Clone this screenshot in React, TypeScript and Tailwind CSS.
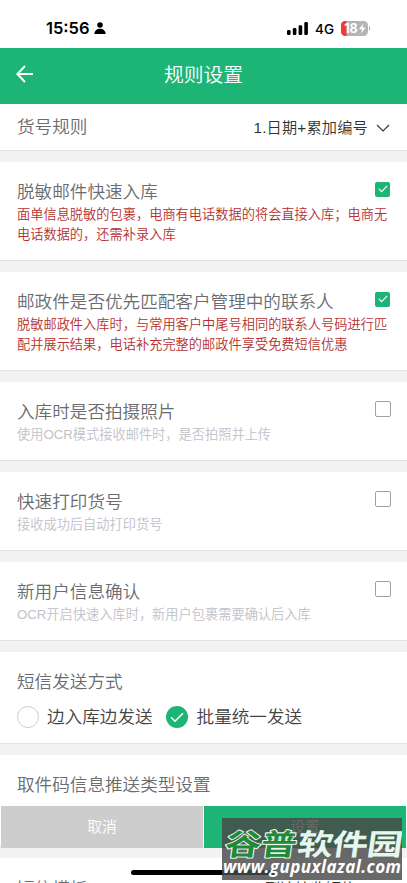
import type { ReactNode } from "react";

type SwitchRule = {
  title: string;
  desc: string;
  checked: boolean;
};

const rules: SwitchRule[] = [
  {
    title: "脱敏邮件快速入库",
    desc: "面单信息脱敏的包裹，电商有电话数据的将会直接入库；电商无电话数据的，还需补录入库",
    checked: true,
  },
  {
    title: "邮政件是否优先匹配客户管理中的联系人",
    desc: "脱敏邮政件入库时，与常用客户中尾号相同的联系人号码进行匹配并展示结果，电话补充完整的邮政件享受免费短信优惠",
    checked: true,
  },
  { title: "入库时是否拍摄照片", desc: "使用OCR模式接收邮件时，是否拍照并上传", checked: false },
  { title: "快速打印货号", desc: "接收成功后自动打印货号", checked: false },
  { title: "新用户信息确认", desc: "OCR开启快速入库时，新用户包裹需要确认后入库", checked: false },
];

function StatusBar() {
  return (
    <div className="flex h-12 shrink-0 items-center bg-white pt-2 pl-[46px] pr-9 text-black">
      <span className="font-['Inter'] text-[16.5px] leading-5 font-semibold">15:56</span>
      <svg className="ml-1 h-3 w-3" viewBox="0 0 12 12" fill="currentColor">
        <circle cx="6" cy="3" r="2.8" />
        <path d="M0.4 12c0-3.2 2.3-5.2 5.6-5.2s5.6 2 5.6 5.2z" />
      </svg>
      <svg className="ml-auto h-[13px] w-[21px]" viewBox="0 0 21 13" fill="currentColor">
        <rect x="0" y="8" width="3.6" height="5" rx="1.2" />
        <rect x="5.8" y="6" width="3.6" height="7" rx="1.2" />
        <rect x="11.6" y="3.2" width="3.6" height="9.8" rx="1.2" />
        <rect x="17.3" y="0" width="3.6" height="13" rx="1.2" />
      </svg>
      <span className="ml-[7px] pt-px font-['Inter'] text-[13.5px] leading-5 font-medium">4G</span>
      <svg className="ml-[7px] h-[15px] w-[30px]" viewBox="0 0 30 15">
        <clipPath id="battery">
          <rect width="27" height="15" rx="4.5" />
        </clipPath>
        <g clipPath="url(#battery)">
          <rect width="27" height="15" fill="#b4b4b4" />
          <rect width="5.5" height="15" fill="#ec3d33" />
        </g>
        <path d="M28 5c1.6.6 1.6 4.4 0 5z" fill="#b4b4b4" />
        <text x="3.2" y="11.8" fill="#fff" fontFamily="Inter" fontSize="12.5" fontWeight="700">
          18
        </text>
        <path d="M22.4 2.5l-4.4 5.8h3l-.9 4.2 4.6-5.9h-3.1z" fill="#fff" />
      </svg>
    </div>
  );
}

function Card({ className, children }: { className: string; children: ReactNode }) {
  return (
    <section className={`shrink-0 border-b border-[#e2e2e2] bg-white px-[17px] ${className}`}>
      {children}
    </section>
  );
}

function Checkbox({ checked }: { checked: boolean }) {
  if (!checked) {
    return <span className="-mr-px h-4 w-4 shrink-0 rounded-xs border border-[#a0a0a0] bg-white" />;
  }
  return (
    <span className="mt-px flex h-[15px] w-[15px] shrink-0 items-start justify-center rounded-xs bg-[#1db576] pt-0.5">
      <svg className="h-2.5 w-2.5" viewBox="0 0 10 10" fill="none" stroke="#fff" strokeWidth="1.1">
        <path d="M0.8 4.7l2.8 2.9 5.6-5.8" />
      </svg>
    </span>
  );
}

function RuleCard({ rule }: { rule: SwitchRule }) {
  return (
    <Card className={rule.checked ? "mb-[11px] h-[99px]" : "mb-[11px] h-[79px]"}>
      <div className="flex items-start justify-between pt-[19px]">
        <h2 className="-mt-px mb-px text-[17.6px] leading-6">{rule.title}</h2>
        <Checkbox checked={rule.checked} />
      </div>
      <p
        className={`-mr-1 text-[13.22px] leading-[19.5px] ${
          rule.checked ? "text-[#b5302e]" : "text-[#bfc1c9]"
        }`}
      >
        {rule.desc}
      </p>
    </Card>
  );
}

function Watermark() {
  return (
    <div className="absolute top-[818px] left-[222px] h-[62px] w-[180px] bg-[#484848]/82">
      <svg className="h-full w-full" viewBox="0 0 180 62">
        <g
          transform="translate(4 36.5) skewX(-8) scale(1.02 0.84)"
          fontFamily="'Noto Sans CJK SC', sans-serif"
          fontSize="35"
          fontWeight="700"
          paintOrder="stroke"
          strokeLinejoin="round"
        >
          <text x="-2" y="0" textLength="70" fill="#218a3a" stroke="#e9f5ea" strokeWidth="2.4">谷普</text>
          <text x="69" y="0" textLength="103" fill="#e6f7ee">软件园</text>
        </g>
        <text x="1" y="55" textLength="178" fill="#fff" fontFamily="'Open Sans', sans-serif" fontSize="17" fontWeight="700" fontStyle="italic">
          www.gupuxlazal.com
        </text>
      </svg>
    </div>
  );
}

export default function App() {
  return (
    <div className="relative flex h-[883px] w-[407px] flex-col overflow-hidden bg-[#f2f2f2] font-['Liberation_Sans','Noto_Sans_CJK_SC',sans-serif] font-[350] text-[#6a6c70]">
      <StatusBar />
      <header className="flex h-14 shrink-0 items-center bg-[#1db576] px-4 text-white">
        <svg className="-mt-1 h-[18px] w-[18px]" viewBox="0 0 18 18" fill="none" stroke="currentColor" strokeWidth="2">
          <path d="M9 1L1.4 9 9 17M1.4 9H17" />
        </svg>
        <h1 className="flex-1 pr-[18px] text-center text-[19.8px]">规则设置</h1>
      </header>

      <Card className="mb-[11px] flex h-[47px] items-center justify-between">
        <span className="text-[17.6px]">货号规则</span>
        <button className="flex items-center gap-2 pt-0.5 text-[15.2px] text-[#333]">
          <span className="tracking-[0.2px]">1.日期+累加编号</span>
          <svg className="h-2 w-3.5" viewBox="0 0 14 8" fill="none" stroke="currentColor" strokeWidth="1.1">
            <path d="M1 1l6 6 6-6" />
          </svg>
        </button>
      </Card>

      {rules.map((rule) => (
        <RuleCard key={rule.title} rule={rule} />
      ))}

      <Card className="mb-[11px] h-[92px] pt-[18px]">
        <h2 className="text-[17.6px] leading-6">短信发送方式</h2>
        <div className="mt-[11px] flex items-center text-[17.6px] leading-6 text-[#444]">
          <span className="h-[22px] w-[22px] rounded-full border border-[#cfcfcf]" />
          <span className="ml-2">边入库边发送</span>
          <span className="ml-[13px] flex h-[22px] w-[22px] items-center justify-center rounded-full bg-[#1db576]">
            <svg className="h-3.5 w-3.5" viewBox="0 0 14 14" fill="none" stroke="#fff" strokeWidth="1.5">
              <path d="M1 7.2l4 4 8-8" />
            </svg>
          </span>
          <span className="ml-[9px]">批量统一发送</span>
        </div>
      </Card>

      <Card className="mb-[11px] h-[92px] pt-[18px]">
        <h2 className="text-[17.6px] leading-6">取件码信息推送类型设置</h2>
      </Card>

      <Card className="flex h-[63px] items-center justify-between">
        <span className="text-[17.6px]">短信模板</span>
        <span className="pr-[34px] text-[15.2px] text-[#333]">到达接收短信</span>
      </Card>

      <div className="absolute top-[806px] left-0 flex h-[42px] w-full gap-px px-px text-[14.8px] text-white">
        <button className="flex-1 bg-[#cdcdcd]">取消</button>
        <button className="flex-1 bg-[#1db576]">设置</button>
      </div>
      <div className="absolute top-[870px] left-[131px] h-[5px] w-[145px] rounded-full bg-black" />
      <Watermark />
    </div>
  );
}
